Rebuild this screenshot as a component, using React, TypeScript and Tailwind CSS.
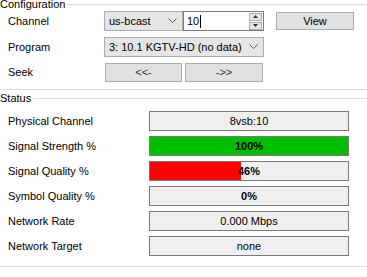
import React from "react";

function Chevron() {
  return (
    <svg width="9" height="6" viewBox="0 0 9 6" className="shrink-0">
      <path d="M0.5 0.5 L4.5 4.5 L8.5 0.5" fill="none" stroke="#5a5a5a" strokeWidth="1" />
    </svg>
  );
}

function GroupHeader({ title }: { title: string }) {
  return (
    <div className="flex items-center h-[8px]">
      <span className="leading-[16px] pr-[2px]">{title}</span>
      <div className="flex-1 h-px bg-[#dcdcdc]" />
    </div>
  );
}

function StatusRow({ label, children }: { label: string; children: React.ReactNode }) {
  return (
    <div className="flex items-center h-[20px]">
      <div className="w-[149px] pl-[8px]">{label}</div>
      <div className="relative w-[200px] h-[20px] border border-[#7a7a7a] bg-[#efefef] flex items-center justify-center overflow-hidden">
        {children}
      </div>
    </div>
  );
}

function Bar({ value, color }: { value: number; color: string }) {
  return (
    <>
      {/* fill width comes from data */}
      <div className="absolute left-0 top-0 bottom-0" style={{ width: `${value}%`, background: color }} />
      <span className="relative font-bold">{value}%</span>
    </>
  );
}

export default function App() {
  return (
    <div
      className="w-[367px] h-[277px] bg-white text-black text-[11px] overflow-hidden"
      style={{ fontFamily: '"Liberation Sans", Arial, sans-serif' }}
    >
      {/* Configuration */}
      <GroupHeader title="Configuration" />
      <div className="flex flex-col gap-[6px] pt-[3px]">
        <div className="flex items-center h-[20px]">
          <div className="w-[104px] pl-[8px]">Channel</div>
          <div className="w-[79px] h-[20px] border border-[#adadad] bg-[#e5e5e5] flex items-center justify-between pl-[4px] pr-[5px]">
            <span>us-bcast</span>
            <Chevron />
          </div>
          <div className="w-[81px] h-[20px] border border-[#7a7a7a] bg-white flex items-center justify-between pl-[3px] pr-[1px]">
            <span className="flex items-center">
              10<span className="w-px h-[13px] bg-black ml-[1px]" />
            </span>
            <div className="flex flex-col w-[13px] h-[17px] gap-px">
              <div className="flex-1 border border-[#adadad] bg-[#e5e5e5] flex items-center justify-center">
                <svg width="5" height="3" viewBox="0 0 5 3">
                  <path d="M0 3 L2.5 0 L5 3 Z" fill="#333" />
                </svg>
              </div>
              <div className="flex-1 border border-[#adadad] bg-[#e5e5e5] flex items-center justify-center">
                <svg width="5" height="3" viewBox="0 0 5 3">
                  <path d="M0 0 L2.5 3 L5 0 Z" fill="#333" />
                </svg>
              </div>
            </div>
          </div>
          <button className="ml-[12px] w-[78px] h-[18px] border border-[#adadad] bg-[#e1e1e1] flex items-center justify-center">
            View
          </button>
        </div>

        <div className="flex items-center h-[20px]">
          <div className="w-[104px] pl-[8px]">Program</div>
          <div className="w-[160px] h-[20px] border border-[#adadad] bg-[#e5e5e5] flex items-center justify-between pl-[4px] pr-[5px]">
            <span>3: 10.1 KGTV-HD (no data)</span>
            <Chevron />
          </div>
        </div>

        <div className="flex items-center h-[19px]">
          <div className="w-[105px] pl-[8px]">Seek</div>
          <button className="w-[77px] h-[19px] border border-[#adadad] bg-[#e1e1e1] flex items-center justify-center text-[#333]">
            &lt;&lt;-
          </button>
          <button className="ml-[3px] w-[78px] h-[19px] border border-[#adadad] bg-[#e1e1e1] flex items-center justify-center text-[#333]">
            -&gt;&gt;
          </button>
        </div>
      </div>
      <div className="mt-[7px] h-px bg-[#dcdcdc]" />

      {/* Status */}
      <div className="mt-[4px]">
        <GroupHeader title="Status" />
      </div>
      <div className="flex flex-col gap-[5px] pt-[9px]">
        <StatusRow label="Physical Channel">
          <span>8vsb:10</span>
        </StatusRow>
        <StatusRow label="Signal Strength %">
          <Bar value={100} color="#00be00" />
        </StatusRow>
        <StatusRow label="Signal Quality %">
          <Bar value={46} color="#ff0000" />
        </StatusRow>
        <StatusRow label="Symbol Quality %">
          <Bar value={0} color="#00be00" />
        </StatusRow>
        <StatusRow label="Network Rate">
          <span>0.000 Mbps</span>
        </StatusRow>
        <StatusRow label="Network Target">
          <span>none</span>
        </StatusRow>
      </div>
      <div className="mt-[10px] h-px bg-[#dcdcdc]" />
    </div>
  );
}
